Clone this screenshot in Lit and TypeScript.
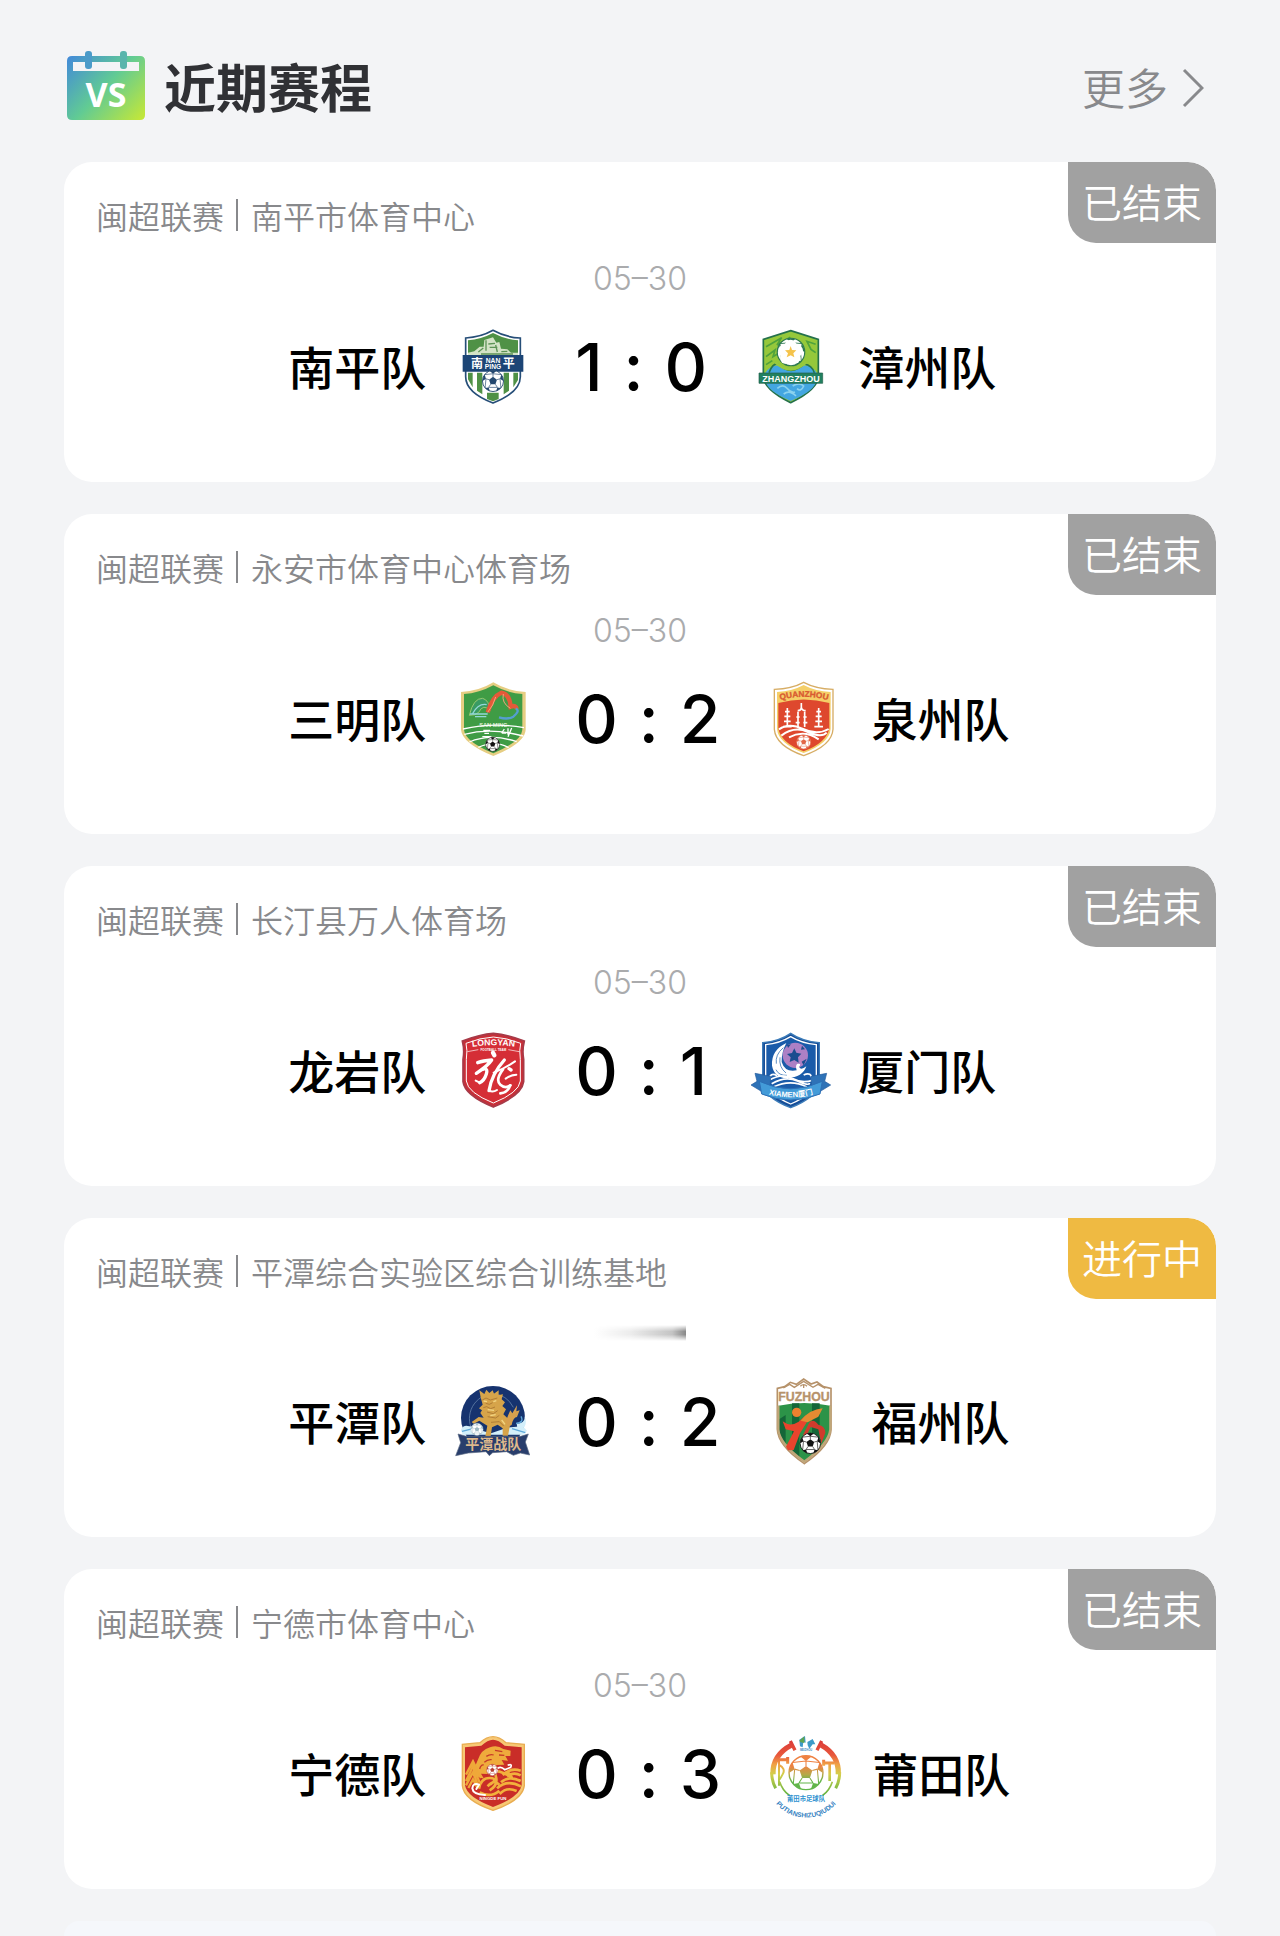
import { LitElement, html, css, svg, TemplateResult } from 'lit';
import { customElement, property } from 'lit/decorators.js';

type Status = 'finished' | 'live';

interface Match {
  league: string;
  venue: string;
  date: string;
  status: Status;
  home: string;
  away: string;
  homeCrest: string;
  awayCrest: string;
  score: [number, number];
}

const STATUS_LABELS: Record<Status, string> = {
  finished: '已结束',
  live: '进行中',
};

const MATCHES: Match[] = [
  {
    league: '闽超联赛', venue: '南平市体育中心', date: '05–30', status: 'finished',
    home: '南平队', away: '漳州队', homeCrest: 'nanping', awayCrest: 'zhangzhou', score: [1, 0],
  },
  {
    league: '闽超联赛', venue: '永安市体育中心体育场', date: '05–30', status: 'finished',
    home: '三明队', away: '泉州队', homeCrest: 'sanming', awayCrest: 'quanzhou', score: [0, 2],
  },
  {
    league: '闽超联赛', venue: '长汀县万人体育场', date: '05–30', status: 'finished',
    home: '龙岩队', away: '厦门队', homeCrest: 'longyan', awayCrest: 'xiamen', score: [0, 1],
  },
  {
    league: '闽超联赛', venue: '平潭综合实验区综合训练基地', date: '', status: 'live',
    home: '平潭队', away: '福州队', homeCrest: 'pingtan', awayCrest: 'fuzhou', score: [0, 2],
  },
  {
    league: '闽超联赛', venue: '宁德市体育中心', date: '05–30', status: 'finished',
    home: '宁德队', away: '莆田队', homeCrest: 'ningde', awayCrest: 'putian', score: [0, 3],
  },
];

// A football on a 100x100 grid, scaled to radius r
const ball = (cx: number, cy: number, r: number, dark = '#111', light = '#fff') => svg`
  <g transform="translate(${cx} ${cy}) scale(${r / 50})">
    <circle r="48" fill=${light} stroke=${dark} stroke-width="4" />
    <path fill=${dark} d="M0-19 18-6 11 15H-11L-18-6Z" />
    <path fill=${dark} d="M-15-45Q0-51 15-45L0-33ZM38-29Q47-17 47 0L32-10ZM36 32Q27 42 14 46L20 29ZM-36 32Q-27 42-14 46L-20 29ZM-38-29Q-47-17-47 0L-32-10Z" />
    <path stroke=${dark} stroke-width="3" fill="none" d="M0-33V-19M32-10 18-6M20 29 11 15M-20 29-11 15M-32-10-18-6M0-33 38-29M32-10 36 32M20 29H-20M-32-10-36 32M0-33-38-29" />
  </g>
`;

const CRESTS: Record<string, TemplateResult> = {
  nanping: svg`
    <path d="M120 13Q157 34 202 36V152Q202 199 120 231Q38 199 38 152V36Q83 34 120 13Z" fill="#fff" stroke="#264e78" stroke-width="5" />
    <path d="M120 21Q156 40 195 43V90H45V43Q84 40 120 21Z" fill="#4f9146" />
    <path d="M45 88V80L64 76 80 62 92 62 94 42 120 34 130 50 139 48 144 68 163 70 174 80 195 80V90Z" fill="#d3e3c6" />
    <path d="M76 78 91 66M99 43V74M106 54 126 52M110 64H133M145 77 163 76M84 84H180M128 57 133 78" stroke="#5d9356" stroke-width="4" fill="none" />
    <path d="M45 140H59V184L45 160ZM72 140H88V205L72 194ZM152 140H168V194L152 205ZM181 140H195V162L181 184ZM102 200H137V219L120 226 102 219Z" fill="#4f9146" />
    <path d="M29 87H211V137H29Z" fill="#1c4576" />
    <text class="cn" x="54" y="125" font-size="36">南</text>
    <text class="cn" x="149" y="125" font-size="36">平</text>
    <text class="latin" x="120" y="110" font-size="20" text-anchor="middle">NAN</text>
    <text class="latin" x="120" y="128" font-size="20" text-anchor="middle">PING</text>
    ${ball(120, 165, 33, '#24486f')}
  `,
  zhangzhou: svg`
    <path d="M119 14 202 40V150Q202 190 119 230Q37 190 37 150V40Z" fill="#95c83b" stroke="#24714b" stroke-width="5" />
    <path d="M45 62 92 35 78 57 118 34M45 92 72 72 66 92 83 82M194 55 168 46 180 70 194 80M45 116 64 104" stroke="#4fa23c" stroke-width="5" fill="none" />
    <path d="M42 142Q60 112 92 120Q120 150 148 120Q180 112 198 142V160Q193 195 119 225Q46 195 42 160Z" fill="#43a6e1" />
    <path d="M54 140Q65 112 80 114Q120 152 160 114Q183 118 190 140" stroke="#28764c" stroke-width="5" fill="none" />
    <path d="M73 109Q118 151 166 109" stroke="#96c93f" stroke-width="8" fill="none" />
    ${ball(120, 78, 43, '#2d7951')}
    <g fill="#fff">
      <circle cx="119" cy="59" r="18" /><circle cx="99" cy="74" r="18" /><circle cx="105" cy="96" r="18" />
      <circle cx="130" cy="96" r="18" /><circle cx="138" cy="74" r="18" />
    </g>
    <path d="M119 60 123 72 136 73 127 82 130 94 119 88 107 94 111 82 102 73 115 72Z" fill="#f5c34b" />
    <path d="M79 187Q96 172 108 187T132 198M125 180Q145 167 158 180Q150 199 138 188M98 204Q115 190 135 210" stroke="#8bd2ef" stroke-width="5" fill="none" />
    <path d="M24 141H215V172H24Z" fill="#218060" stroke="#235f49" stroke-width="2" />
    <text class="latin" x="120" y="167" font-size="27" text-anchor="middle">ZHANGZHOU</text>
  `,
  sanming: svg`
    <path d="M121 13Q165 40 218 42V155Q216 195 121 234Q27 195 24 155V42Q77 40 121 13Z" fill="#e6ce83" />
    <path d="M121 22Q165 46 208 48V155Q206 190 121 226Q36 190 33 155V48Q77 46 121 22Z" fill="#3f9c45" />
    <path d="M49 112Q61 60 89 61Q109 67 111 98Q91 75 77 103Q67 113 49 112Z" fill="#399b63" stroke="#9ac870" stroke-width="3" />
    <path d="M58 108Q76 75 101 80M51 108H104M66 116H100" stroke="#94d7d8" stroke-width="4" fill="none" />
    <path d="M104 103Q118 55 145 44Q170 48 173 86Q190 80 191 93" stroke="#e35a39" stroke-width="13" fill="none" />
    <path d="M104 103Q122 82 128 57M151 48Q145 75 172 91" stroke="#f5a47b" stroke-width="3" fill="none" />
    <path d="M188 92Q203 97 181 116 165 126 138 118" stroke="#559ed0" stroke-width="7" fill="none" />
    <text class="latin" x="121" y="146" font-size="17" fill="#d8edce" text-anchor="middle">SAN MING</text>
    <path d="M30 153Q120 132 213 149M34 169Q115 148 211 174M49 192Q112 165 191 191M76 208Q125 185 167 209" stroke="#fff" stroke-width="4" fill="none" />
    <path d="M91 157H111M94 166H108M88 176H115M146 165 154 153M146 165H159M165 151V170M176 150 165 176" stroke="#fff" stroke-width="4" fill="none" />
    ${ball(119, 199, 22)}
  `,
  quanzhou: svg`
    <path d="M119 13Q154 32 207 34V154Q204 203 119 233Q35 203 31 154V34Q84 32 119 13Z" fill="#fff" stroke="#d7ad65" stroke-width="4" />
    <path d="M119 21Q154 40 200 42V153Q196 196 119 225Q43 196 39 153V42Q84 40 119 21Z" fill="#f5cf68" />
    <path d="M43 75Q119 54 196 75V151Q188 195 119 220Q50 195 43 151Z" fill="#de482e" />
    <path id="quanzhou-arc" d="M46 67Q119 46 194 67" fill="none" />
    <text class="latin" font-size="25" fill="#d95a31" stroke="#d95a31"><textPath href="#quanzhou-arc" startOffset="50%" text-anchor="middle">QUANZHOU</textPath></text>
    <path d="M70 90V148M63 101H77M61 115H79M60 130H80M57 146H83M164 90V148M157 101H171M155 115H173M154 130H174M151 146H177M112 75V91M101 98Q112 98 112 88Q114 98 125 98M102 101V147M122 101V147M97 117H107M95 134H107M118 117H128M118 134H130" stroke="#fff" stroke-width="5" fill="none" />
    <path d="M45 154Q75 133 117 153T194 153M52 173Q91 143 132 162T188 164M75 178Q120 154 164 184" stroke="#fff" stroke-width="6" fill="none" />
    ${ball(119, 192, 22, '#e26748')}
  `,
  longyan: svg`
    <path d="M121 10Q161 13 214 33Q207 61 212 88V155Q207 196 121 231Q35 196 30 155V88Q35 61 28 33Q81 13 121 10Z" fill="#c72f38" stroke="#a63b49" stroke-width="5" />
    <path d="M121 21Q160 23 203 40Q198 60 202 88V153Q198 188 121 219Q44 188 40 153V88Q44 60 39 40Q82 23 121 21Z" fill="#d52e36" stroke="#fff" stroke-width="3" />
    <path id="longyan-arc" d="M44 52Q121 40 199 52" fill="none" />
    <text class="latin" font-size="26"><textPath href="#longyan-arc" startOffset="50%" text-anchor="middle">LONGYAN</textPath></text>
    <path d="M43 65 76 59M166 59 199 65" stroke="#fff" stroke-width="2" />
    <text class="latin" x="121" y="62" font-size="9" text-anchor="middle">FOOTBALL TEAM</text>
    <g stroke="#fff" fill="none" stroke-linecap="round" stroke-linejoin="round">
      <path d="M120 68 124 76" stroke-width="13" />
      <path d="M74 98Q90 92 116 90Q104 108 70 130" stroke-width="10" />
      <path d="M88 118Q106 112 100 132T80 158" stroke-width="10" />
      <path d="M80 158 68 152" stroke-width="6" />
      <path d="M154 90Q116 132 108 182" stroke-width="10" />
      <path d="M108 182Q120 188 132 180" stroke-width="6" />
      <path d="M122 128Q154 116 186 94" stroke-width="6" />
      <path d="M150 118Q126 150 142 164T172 166" stroke-width="8" />
      <path d="M172 166Q164 188 142 190" stroke-width="8" />
      <path d="M158 146Q174 134 190 134" stroke-width="6" />
      <path d="M168 116 174 120" stroke-width="10" />
    </g>
  `,
  xiamen: svg`
    <path d="M119 10Q154 34 205 38V157Q198 202 119 233Q38 202 35 157V38Q85 34 119 10Z" fill="#174e98" stroke="#3c7cb9" stroke-width="4" />
    <path d="M119 20Q152 40 196 44V154Q189 192 119 222Q49 192 44 154V44Q86 40 119 20Z" fill="#1a5ba9" stroke="#fff" stroke-width="4" />
    <circle cx="133" cy="76" r="38" fill="#ad80c5" />
    <path d="M130 55 136 68 151 71 141 82 143 98 130 90 116 96 119 82 108 72 123 69ZM108 45 120 43 111 54ZM153 47 162 58 150 59ZM167 86 158 106 152 95Z" fill="#1b4d8f" />
    <path d="M106 39Q60 60 63 107 71 146 110 144 155 142 166 109 149 123 144 110 153 100 140 101 132 104 137 121 102 128 92 96 91 67 106 39Z" fill="#fff" />
    <path d="M97 53Q72 74 76 101M87 82Q83 112 105 129M75 119Q83 137 108 136" stroke="#5f90c5" stroke-width="3" fill="none" />
    <path d="M54 151Q57 125 78 137M184 151Q181 123 158 135M55 150Q94 129 123 145T184 151M62 161Q104 137 139 153T176 159M67 171Q119 146 168 171" stroke="#fff" stroke-width="5" fill="none" />
    <path d="M12 130 59 139 57 183 31 184 0 165 18 154ZM227 130 180 139 182 183 208 184 239 165 221 154Z" fill="#2e72b7" stroke="#235b9d" stroke-width="2" />
    <path id="xiamen-arc" d="M36 188Q119 216 204 188" fill="none" />
    <path d="M25 154Q119 199 214 154L207 192Q119 228 32 192Z" fill="#439bd8" stroke="#2c6fb5" stroke-width="3" />
    <text class="latin" font-size="23"><textPath href="#xiamen-arc" startOffset="50%" text-anchor="middle">XIAMEN厦门</textPath></text>
  `,
  pingtan: svg`
    <circle cx="120" cy="111" r="96" fill="#16336f" />
    <path d="M58 148A75 75 0 0 1 119 38A76 76 0 0 1 181 79" stroke="#7492b5" stroke-width="2" fill="none" />
    <path d="M24 147Q31 130 49 136 77 137 92 151L114 157 162 140 191 137Q204 126 222 149L211 161H29ZM191 128Q221 127 213 103 223 121 215 137L194 145Z" fill="#d3effa" />
    <path d="M189 127Q214 125 204 106M177 143 217 155M27 151 60 143" stroke="#5fa9da" stroke-width="4" fill="none" />
    <path d="M83 49 79 28 94 39 100 26 109 36 119 28 123 38 137 28 137 42 150 40 146 55 156 64 148 75 159 85 151 100 163 111 171 133 165 164H149V142L134 131 117 139 113 166H97L103 134 79 119 62 128 56 123 77 108 92 110 82 96 87 88 78 82 89 71Z" fill="#d6a44a" />
    <path d="M88 57 99 51 112 57 133 51M98 67 109 70 119 65M91 80 101 77 113 83 126 78M102 93 121 98 134 89M104 107 128 111 139 103M114 124 139 122 152 135" stroke="#9b682b" stroke-width="2" fill="none" />
    <path d="M92 60 102 62M121 62 130 59M104 86 123 88M112 104 128 101M146 117 156 130" stroke="#f3d684" stroke-width="4" />
    <path d="M158 122 166 101 172 88 178 97 192 73 190 91 200 88 192 108Q181 108 176 132L166 137Z" fill="#d7a04e" />
    ${ball(72, 145, 19, '#9db7c1')}
    <path d="M15 159 40 166H203L226 159 217 183 230 222 202 216 181 223 161 212 119 215 109 224 99 212 46 216 8 224 23 185Z" fill="#293e6c" stroke="#5b6984" stroke-width="2" />
    <text class="cn" x="121" y="204" font-size="42" fill="#dfb98c" text-anchor="middle">平潭战队</text>
  `,
  fuzhou: svg`
    <path d="M40 22 62 17 79 4 97 10 119-6 141 9 159 3 178 17 201 22V145Q200 194 121 248Q42 194 40 145Z" fill="#fff" stroke="#b6926a" stroke-width="5" />
    <path d="M58 21 77 10 91 19 119 1 147 19 162 10 184 22M119 21V10M109 16Q119 6 129 16" stroke="#b6926a" stroke-width="4" fill="none" />
    <path d="M43 74Q120 58 199 74V145Q195 187 121 242Q45 187 43 145Z" fill="#2c9348" />
    <path d="M84 67H106V231L84 212ZM144 67H167V204L144 225ZM43 116 65 102V193L43 160Z" fill="#146638" />
    <path d="M43 74V145Q45 187 121 242Q195 187 199 145V74" fill="none" stroke="#bfa678" stroke-width="7" />
    <text class="latin" x="120" y="60" font-size="37" fill="#b6926a" stroke="#b6926a" text-anchor="middle">FUZHOU</text>
    <path d="M56 121Q78 139 104 122 130 95 167 84L163 104 134 115 108 157 89 207 72 208 66 197 90 151 65 145Z" fill="#e9442d" />
    <path d="M110 119Q137 85 176 82L163 107 131 124Z" fill="#e58b32" />
    <path d="M135 126Q147 110 163 131 183 134 184 155L172 188 163 145 140 138 127 165 117 162Z" fill="#cf3b2d" />
    <circle cx="98" cy="94" r="14" fill="#ed812f" />
    ${ball(139, 187, 32)}
  `,
  ningde: svg`
    <path d="M120 11Q139 11 159 29L214 34V158Q209 202 120 232Q32 202 28 158V34L81 29Q101 11 120 11Z" fill="#f7c874" stroke="#e9ad51" stroke-width="4" />
    <path d="M120 20Q137 20 155 38L206 43V157Q199 193 120 222Q42 193 36 157V43L85 38Q104 20 120 20Z" fill="#c92d28" />
    <path d="M66 128Q62 102 74 82Q84 50 111 43Q132 34 151 48L173 53 172 69 157 69 165 83 146 81 154 95 130 96 127 108 102 107 105 123 84 122 93 137Z" fill="#efab3c" />
    <path d="M126 52 148 56M138 66 154 67M100 70Q112 62 122 66M94 88Q104 78 116 80M80 108Q84 94 92 96" stroke="#c63a29" stroke-width="4" fill="none" />
    <path d="M39 125 60 85 84 135M39 144 60 100 80 149M39 157 60 118 75 157M46 165 60 139 73 164" stroke="#efa839" stroke-width="7" fill="none" />
    <path d="M78 167Q84 134 111 135T111 155M110 172Q137 156 128 128T176 133Q166 111 149 126 173 103 203 113M144 148Q168 126 203 144M132 166Q161 138 204 160M140 183Q161 160 191 174M80 178Q113 196 139 173M104 160Q121 138 139 155M162 130Q182 115 203 127" stroke="#f2b03c" stroke-width="8" fill="none" />
    ${ball(118, 111, 18, '#b74336')}
    <path d="M78 155Q60 148 58 166Q60 184 96 186M70 168 78 155" stroke="#fff" stroke-width="6" fill="none" stroke-linecap="round" />
    <path d="M134 106Q144 99 155 110L173 103Q179 91 164 97" stroke="#fff" stroke-width="5" fill="none" />
    <text class="latin" x="120" y="201" font-size="13" text-anchor="middle">NINGDE FUN</text>
  `,
  putian: svg`
    <defs>
      <linearGradient id="putian-ring" gradientUnits="userSpaceOnUse" x1="0" y1="25" x2="0" y2="190">
        <stop offset="0" stop-color="#dc3c38" />
        <stop offset="0.25" stop-color="#e8583c" />
        <stop offset="0.42" stop-color="#f0a045" />
        <stop offset="0.6" stop-color="#d3cf4c" />
        <stop offset="1" stop-color="#58b03f" />
      </linearGradient>
      <linearGradient id="putian-ball" gradientUnits="userSpaceOnUse" x1="0" y1="-48" x2="0" y2="48">
        <stop offset="0.3" stop-color="#ee8142" />
        <stop offset="0.55" stop-color="#b7a848" />
        <stop offset="0.75" stop-color="#61b54a" />
      </linearGradient>
    </defs>
    <g stroke="url(#putian-ring)" fill="none">
      <path d="M80 36Q22 66 24 124" stroke-width="16" />
      <path d="M20 118Q20 144 32 166" stroke-width="9" />
      <path d="M168 36Q222 66 220 124" stroke-width="16" />
      <path d="M224 118Q224 144 212 166" stroke-width="9" />
      <path d="M76 24 90 52M170 24 156 52" stroke-width="10" />
      <path d="M38 80H72M68 72V92" stroke-width="9" />
      <path d="M172 90H208M176 80V98" stroke-width="9" />
      <path d="M42 82V158M42 96Q62 106 54 122T42 140" stroke-width="6" />
      <path d="M194 90V144" stroke-width="8" />
      <path d="M44 146Q52 172 74 188M202 146Q194 172 172 188" stroke-width="5" />
    </g>
    ${ball(123, 119, 53, 'url(#putian-ball)')}
    <path d="M103 20 120 9 122 29 115 27 113 43 105 40ZM127 27 143 18 151 34 143 34 133 47 128 37Z" fill="#3e9ac8" />
    <path d="M103 23 118 10V30L107 28Z" fill="#60a54f" />
    <text class="latin" x="123" y="53" font-size="8" fill="#3e8dc3" text-anchor="middle">MEIZHOU</text>
    <text class="cn" x="123" y="204" font-size="19" fill="#2d91cf" text-anchor="middle">莆田市足球队</text>
    <path id="putian-arc" d="M10 172A119 119 0 0 0 236 172" fill="none" />
    <text class="latin" font-size="20" fill="#3582c1"><textPath href="#putian-arc" startOffset="50%" text-anchor="middle">PUTIANSHIZUQIUDUI</textPath></text>
  `,
};

@customElement('team-crest')
export class TeamCrest extends LitElement {
  static styles = css`
    :host {
      display: block;
      flex: none;
      width: 80px;
      height: 80px;
    }

    .crest {
      display: block;
      width: 100%;
      height: 100%;
      overflow: visible;
    }

    .cn {
      font-family: 'Noto Sans CJK SC', sans-serif;
      font-weight: 700;
    }

    .latin {
      font-family: 'Liberation Sans', 'Noto Sans CJK SC', sans-serif;
      font-weight: 700;
    }
  `;

  @property() team = '';
  @property() label = '';

  render() {
    return html`
      <svg class="crest" viewBox="0 0 240 240" role="img" aria-label=${this.label} fill="#fff">
        ${CRESTS[this.team]}
      </svg>
    `;
  }
}

@customElement('match-card')
export class MatchCard extends LitElement {
  static styles = css`
    :host {
      display: block;
    }

    .card {
      position: relative;
      padding: 32px 32px 76px;
      border-radius: 28px;
      background: #fff;
      overflow: hidden;
    }

    .meta {
      display: flex;
      align-items: center;
      padding-right: 148px;
      color: #88898c;
      font-size: 32px;
      font-weight: 350;
      line-height: 42px;
    }

    .divider {
      width: 2px;
      height: 32px;
      margin: 0 13px 0 12px;
      background: #88898c;
    }

    .status {
      position: absolute;
      top: 0;
      right: 0;
      padding: 11px 14px 14px;
      border-radius: 0 28px 0 28px;
      background: #a1a1a1;
      color: #fff;
      font-size: 40px;
      font-weight: 350;
      line-height: 56px;
    }

    .status.live {
      background: #efba42;
    }

    .date {
      display: block;
      margin-top: 23px;
      color: #aaabad;
      font-family: Inter, sans-serif;
      font-size: 32px;
      font-weight: 300;
      line-height: 40px;
      text-align: center;
    }

    .smear {
      width: 92px;
      height: 16px;
      margin: 33px auto 40px;
      background: linear-gradient(to right, #fff, #ececec 40%, #c4c4c4 85%, #888);
      -webkit-mask-image: linear-gradient(transparent, #000 40%, #000 60%, transparent);
      mask-image: linear-gradient(transparent, #000 40%, #000 60%, transparent);
    }

    .teams {
      display: flex;
      align-items: center;
      gap: 42px;
      margin-top: 27px;
      color: #000;
    }

    .team {
      display: flex;
      align-items: center;
      gap: 27px;
      font-size: 46px;
      font-weight: 500;
      line-height: 64px;
      white-space: nowrap;
    }

    .name {
      padding-bottom: 3px;
    }

    .home {
      flex: 0 0 calc(40% + 2px);
      justify-content: flex-end;
    }

    .score {
      display: flex;
      gap: 21px;
      padding: 2px 2px 0 0;
      font-family: Inter, sans-serif;
      font-size: 66px;
      font-weight: 500;
      line-height: 78px;
    }
  `;

  @property({ attribute: false }) match!: Match;

  render() {
    const m = this.match;
    return html`
      <article class="card">
        <div class="meta">
          <span>${m.league}</span>
          <span class="divider"></span>
          <span>${m.venue}</span>
        </div>
        <span class="status ${m.status}">${STATUS_LABELS[m.status]}</span>
        ${m.date
          ? html`<time class="date">${m.date}</time>`
          : html`<div class="smear"></div>`}
        <div class="teams">
          <div class="team home">
            <span class="name">${m.home}</span>
            <team-crest team=${m.homeCrest} label=${m.home}></team-crest>
          </div>
          <div class="score">
            <span>${m.score[0]}</span>
            <span>:</span>
            <span>${m.score[1]}</span>
          </div>
          <div class="team">
            <team-crest team=${m.awayCrest} label=${m.away}></team-crest>
            <span class="name">${m.away}</span>
          </div>
        </div>
      </article>
    `;
  }
}

@customElement('app-root')
export class AppRoot extends LitElement {
  static styles = css`
    :host {
      display: flex;
      flex-direction: column;
      box-sizing: border-box;
      min-height: 100vh;
      padding: 0 64px;
      background: #f3f4f6;
      font-family: 'Noto Sans CJK SC', sans-serif;
    }

    .header {
      display: flex;
      align-items: center;
      padding: 46px 12px 36px 2px;
    }

    .calendar {
      width: 80px;
      height: 74px;
    }

    .vs {
      font-family: 'Noto Sans', sans-serif;
      font-size: 34px;
      font-weight: 700;
    }

    .title {
      margin: 0 auto 0 18px;
      color: #303135;
      font-size: 52px;
      font-weight: 700;
      line-height: 80px;
    }

    .more {
      display: flex;
      align-items: center;
      gap: 14px;
      color: #88898c;
      font-size: 43px;
      font-weight: 350;
      line-height: 80px;
      text-decoration: none;
    }

    .chevron {
      width: 22px;
      height: 40px;
      padding-top: 4px;
    }

    .list {
      display: grid;
      gap: 32px;
    }

    .next {
      flex: 1;
      min-height: 14px;
      margin-top: 32px;
      border-radius: 28px 28px 0 0;
      background: #f5f7fb;
    }
  `;

  render() {
    return html`
      <header class="header">
        <svg class="calendar" viewBox="0 0 80 74" aria-hidden="true">
          <defs>
            <linearGradient id="calendar-fill" gradientUnits="userSpaceOnUse" x1="2" y1="8" x2="72" y2="72">
              <stop offset="0" stop-color="#438bd8" />
              <stop offset="0.5" stop-color="#61cb94" />
              <stop offset="1" stop-color="#c0e63c" />
            </linearGradient>
          </defs>
          <path
            fill="url(#calendar-fill)"
            fill-rule="evenodd"
            d="M6 7H74Q79 7 79 12V66Q79 71 74 71H6Q1 71 1 66V12Q1 7 6 7ZM7 13V22H73V13Z"
          />
          <rect x="19" y="2" width="7" height="18" rx="3" fill="#4b9bc9" />
          <rect x="54" y="2" width="7" height="18" rx="3" fill="#59b5ac" />
          <text class="vs" x="40" y="58" text-anchor="middle" fill="#fff">VS</text>
        </svg>
        <h1 class="title">近期赛程</h1>
        <a class="more" href="#">
          更多
          <svg class="chevron" viewBox="0 0 22 40" aria-hidden="true">
            <path d="M2 2 20 20 2 38" fill="none" stroke="#88898c" stroke-width="3" />
          </svg>
        </a>
      </header>
      <main class="list">
        ${MATCHES.map((match) => html`<match-card .match=${match}></match-card>`)}
      </main>
      <div class="next"></div>
    `;
  }
}

declare global {
  interface HTMLElementTagNameMap {
    'app-root': AppRoot;
    'match-card': MatchCard;
    'team-crest': TeamCrest;
  }
}
